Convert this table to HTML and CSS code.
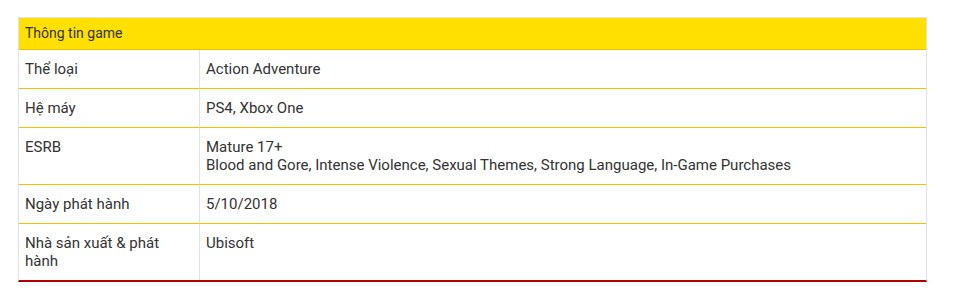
FILE: index.html
```html
<!DOCTYPE html>
<html lang="vi">
<head>
<meta charset="utf-8">
<title>Thông tin game</title>
<link rel="stylesheet" href="styles.css">
</head>
<body>
<div class="page">
  <table class="game-info">
    <thead>
      <tr><th colspan="2" class="game-info__title">Thông tin game</th></tr>
    </thead>
    <tbody>
      <tr><td class="game-info__label">Thể loại</td><td class="game-info__value">Action Adventure</td></tr>
      <tr><td class="game-info__label">Hệ máy</td><td class="game-info__value">PS4, Xbox One</td></tr>
      <tr><td class="game-info__label">ESRB</td><td class="game-info__value">Mature 17+<br>Blood and Gore, Intense Violence, Sexual Themes, Strong Language, In-Game Purchases</td></tr>
      <tr><td class="game-info__label">Ngày phát hành</td><td class="game-info__value">5/10/2018</td></tr>
      <tr><td class="game-info__label">Nhà sản xuất &amp; phát hành</td><td class="game-info__value">Ubisoft</td></tr>
    </tbody>
  </table>
</div>
</body>
</html>
```
FILE: styles.css
```css
html, body {
  margin: 0;
  background: #fff;
}

.page {
  padding: 17px 34px 0 18px;
}

.game-info {
  width: 909px;
  border-collapse: separate;
  border-spacing: 0;
  border-top: 1px solid #e2e2e2;
  border-left: 1px solid #e2e2e2;
  border-right: 1px solid #e2e2e2;
  border-bottom: 2px solid #b30000;
  font-family: Roboto, "Noto Sans", sans-serif;
  font-size: 15px;
  line-height: 18px;
  color: #333;
}

.game-info__title {
  background: #ffe000;
  text-align: left;
  font-weight: normal;
  font-size: 14px;
  padding: 6px 6px 7px;
  border-bottom: 1px solid #f0c000;
}

.game-info td {
  vertical-align: top;
  padding: 10px 6px;
  border-bottom: 1px solid #f2c200;
}

.game-info tbody tr:last-child td {
  border-bottom: none;
}

.game-info__label {
  width: 168px;
  border-right: 1px solid #e2e2e2;
}

.game-info__value {
  padding-left: 5px;
}
```
